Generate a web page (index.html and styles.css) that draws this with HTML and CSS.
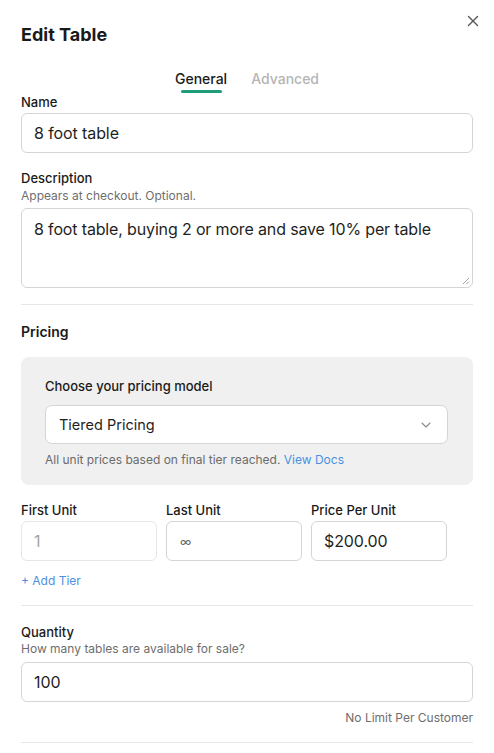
FILE: index.html
```html
<!DOCTYPE html>
<html lang="en">
<head>
<meta charset="utf-8">
<title>Edit Table</title>
<link rel="stylesheet" href="styles.css">
</head>
<body>
<div class="modal">
  <button class="close" aria-label="Close">
    <svg width="12" height="12" viewBox="0 0 12 12"><path d="M1.5 1.5 L10.5 10.5 M10.5 1.5 L1.5 10.5" stroke="#555" stroke-width="1.4" stroke-linecap="round" fill="none"/></svg>
  </button>
  <h1 class="title">Edit Table</h1>
  <div class="tabs">
    <span class="tab active">General</span>
    <span class="tab">Advanced</span>
  </div>

  <div class="field">
    <label class="label">Name</label>
    <div class="input">8 foot table</div>
  </div>

  <div class="field field-desc">
    <label class="label">Description</label>
    <div class="help">Appears at checkout. Optional.</div>
    <div class="textarea">8 foot table, buying 2 or more and save 10% per table
      <svg class="grip" width="8" height="8" viewBox="0 0 8 8"><path d="M7 1 L1 7 M7 4.5 L4.5 7" stroke="#999" stroke-width="0.9" fill="none"/></svg>
    </div>
  </div>

  <hr class="divider">

  <h2 class="section">Pricing</h2>
  <div class="pricebox">
    <div class="label">Choose your pricing model</div>
    <div class="select">
      <span>Tiered Pricing</span>
      <svg width="10" height="6" viewBox="0 0 10 6"><path d="M1 1 L5 5 L9 1" stroke="#8a8a8a" stroke-width="1.1" fill="none" stroke-linecap="round" stroke-linejoin="round"/></svg>
    </div>
    <div class="help help-box">All unit prices based on final tier reached. <a class="link">View Docs</a></div>
  </div>

  <div class="tiers">
    <div class="tier">
      <label class="label">First Unit</label>
      <div class="input input-disabled">1</div>
    </div>
    <div class="tier">
      <label class="label">Last Unit</label>
      <div class="input input-inf">∞</div>
    </div>
    <div class="tier">
      <label class="label">Price Per Unit</label>
      <div class="input">$200.00</div>
    </div>
  </div>
  <a class="link add-tier">+ Add Tier</a>

  <hr class="divider">

  <div class="field field-qty">
    <label class="label">Quantity</label>
    <div class="help">How many tables are available for sale?</div>
    <div class="input input-qty">100</div>
  </div>
  <div class="limit">No Limit Per Customer</div>

  <hr class="divider">
</div>
</body>
</html>
```

FILE: styles.css
```css
* { box-sizing: border-box; }
html, body { margin: 0; padding: 0; background: #fff; }
body {
  font-family: Inter, "Noto Sans", "Liberation Sans", sans-serif;
  color: #1b1b1b;
  -webkit-font-smoothing: antialiased;
}
.modal {
  position: relative;
  padding: 23px 21px 0 21px;
  width: 494px;
}
.close {
  position: absolute;
  top: 15px;
  right: 15px;
  width: 12px;
  height: 12px;
  padding: 0;
  border: 0;
  background: none;
  display: flex;
}
.title {
  margin: 0;
  font-size: 18px;
  line-height: 24px;
  font-weight: 700;
  color: #1a1a1a;
}
.tabs {
  display: flex;
  justify-content: center;
  gap: 24px;
  margin-top: 22px;
  height: 24px;
}
.tab {
  position: relative;
  font-size: 14px;
  line-height: 20px;
  font-weight: 500;
  color: #b5b5b5;
}
.tab.active { color: #1a1a1a; }
.tab.active::after {
  content: "";
  position: absolute;
  left: 6px;
  right: 5px;
  top: 21px;
  height: 3px;
  border-radius: 2px;
  background: #1f9d78;
}
.field { display: flex; flex-direction: column; }
.label {
  display: block;
  font-size: 13px;
  line-height: 18px;
  font-weight: 500;
  color: #1a1a1a;
}
.help {
  font-size: 12px;
  line-height: 16px;
  color: #6e6e6e;
}
.input {
  height: 40px;
  margin-top: 2px;
  border: 1px solid #d5d5d5;
  border-radius: 6px;
  padding: 0 12px;
  display: flex;
  align-items: center;
  font-size: 16px;
  letter-spacing: -0.1px;
  color: #1f1f1f;
  background: #fff;
}
.field-desc { margin-top: 16px; }
.field-desc .help { margin-top: 1px; }
.textarea {
  position: relative;
  margin-top: 4px;
  height: 80px;
  border: 1px solid #d5d5d5;
  border-radius: 6px;
  padding: 9px 12px;
  font-size: 16px;
  letter-spacing: -0.15px;
  line-height: 22px;
  color: #1f1f1f;
}
.grip { position: absolute; right: 2px; bottom: 2px; }
.divider {
  border: 0;
  border-top: 1px solid #e6e6e6;
  margin: 16px 0 0 0;
}
.section {
  margin: 17px 0 0 0;
  font-size: 14px;
  line-height: 20px;
  font-weight: 600;
  color: #1a1a1a;
}
.pricebox {
  margin-top: 15px;
  background: #f0f0f0;
  border-radius: 8px;
  padding: 20px 25px 17px 24px;
}
.select {
  margin-top: 10px;
  height: 39px;
  background: #fff;
  border: 1px solid #d5d5d5;
  border-radius: 7px;
  padding: 0 16px 0 13px;
  display: flex;
  align-items: center;
  justify-content: space-between;
  font-size: 14.5px;
  color: #1f1f1f;
}
.help-box { margin-top: 8px; color: #6b6b6b; }
.link { color: #4a90e2; text-decoration: none; cursor: pointer; }
.tiers {
  display: grid;
  grid-template-columns: 136px 136px 136px;
  gap: 9px;
  margin-top: 16px;
}
.input-disabled { border-color: #e6e6e6; color: #a3a3a3; }
.input-inf { font-size: 12px; color: #666; padding-left: 13px; }
.add-tier {
  display: block;
  margin-top: 12px;
  font-size: 12px;
  line-height: 16px;
}
.field-qty { margin-top: 17px; }
.input-qty { margin-top: 5px; height: 40px; }
.limit {
  margin-top: 8px;
  text-align: right;
  font-size: 12px;
  line-height: 16px;
  color: #6e6e6e;
}
```
